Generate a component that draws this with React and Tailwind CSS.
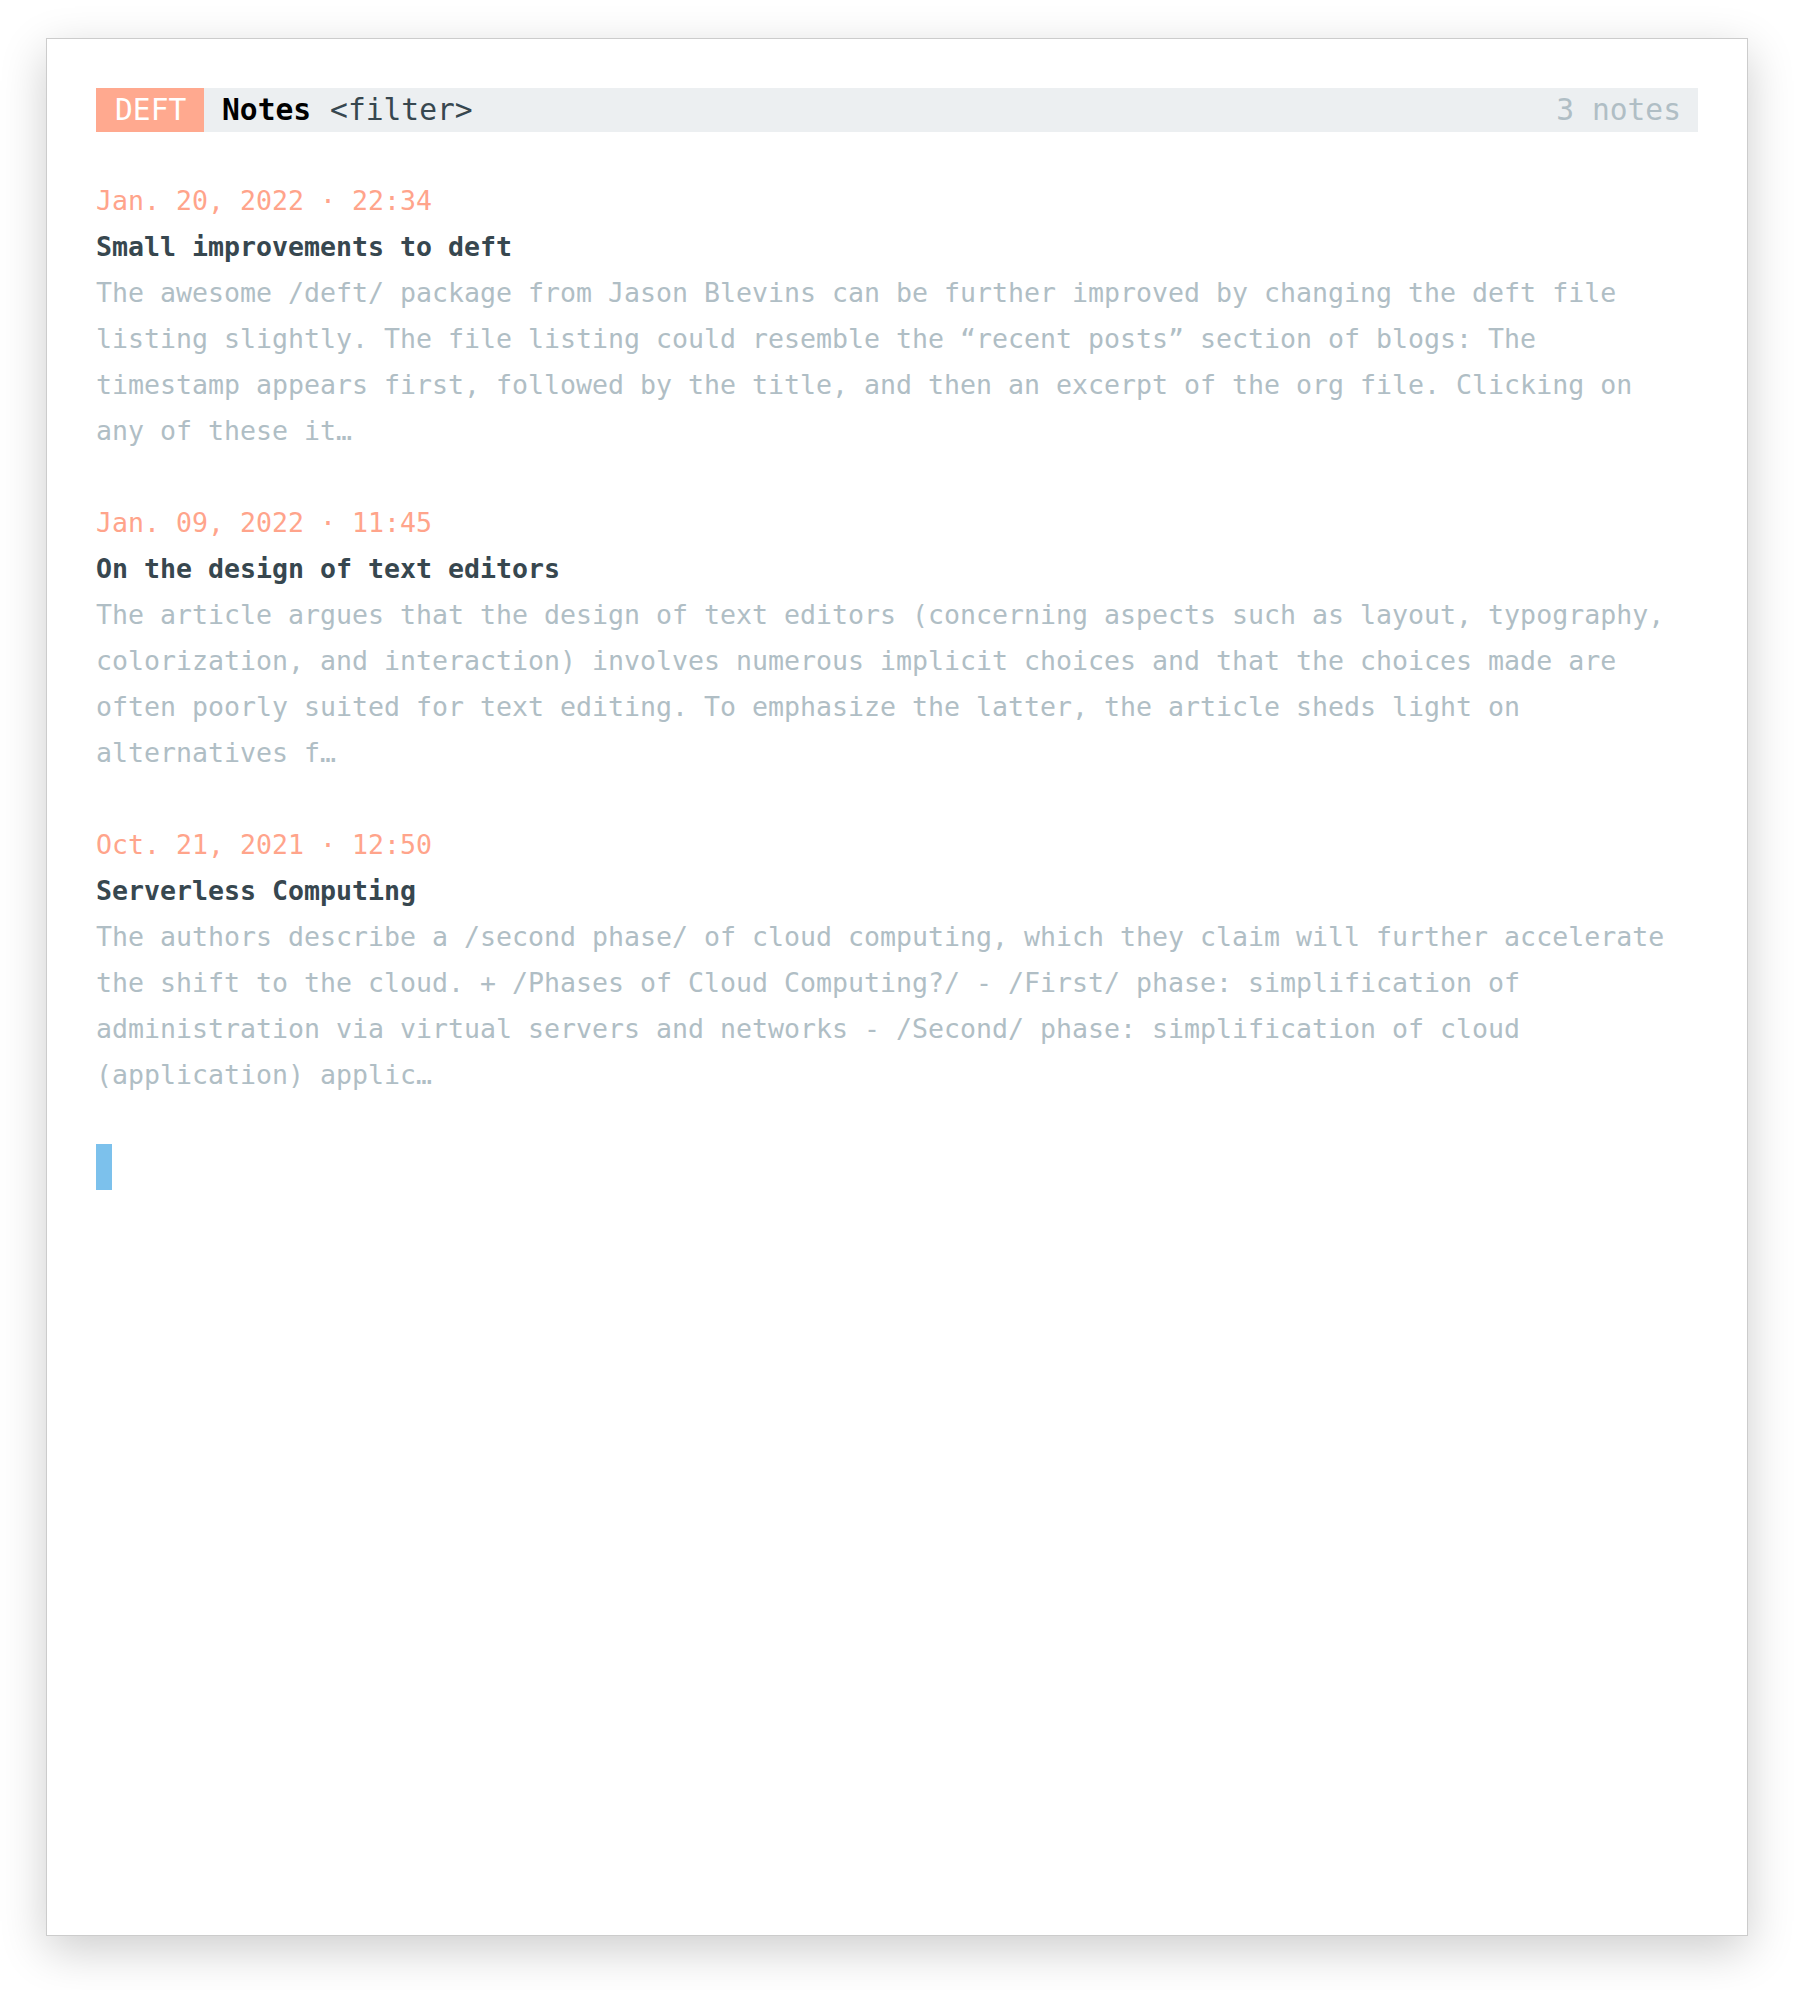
import React from 'react';

const notes = [
  {
    date: 'Jan. 20, 2022 · 22:34',
    title: 'Small improvements to deft',
    excerpt:
      'The awesome /deft/ package from Jason Blevins can be further improved by changing the deft file listing slightly. The file listing could resemble the “recent posts” section of blogs: The timestamp appears first, followed by the title, and then an excerpt of the org file. Clicking on any of these it…',
  },
  {
    date: 'Jan. 09, 2022 · 11:45',
    title: 'On the design of text editors',
    excerpt:
      'The article argues that the design of text editors (concerning aspects such as layout, typography, colorization, and interaction) involves numerous implicit choices and that the choices made are often poorly suited for text editing. To emphasize the latter, the article sheds light on alternatives f…',
  },
  {
    date: 'Oct. 21, 2021 · 12:50',
    title: 'Serverless Computing',
    excerpt:
      'The authors describe a /second phase/ of cloud computing, which they claim will further accelerate the shift to the cloud. + /Phases of Cloud Computing?/ - /First/ phase: simplification of administration via virtual servers and networks - /Second/ phase: simplification of cloud (application) applic…',
  },
];

const mono = "font-['DejaVu_Sans_Mono','Liberation_Mono',monospace]";

const App = () => {
  return (
    <div className={`w-[1794px] h-[1990px] bg-white pl-[46px] pt-[38px] ${mono}`}>
      {/* Window */}
      <div className="w-[1702px] h-[1898px] bg-white border border-black/20 shadow-[0_14px_44px_rgba(0,0,0,0.2)] pt-[49px] pl-[49px]">
        {/* Header */}
        <div className="w-[1602px] h-[44px] bg-[#eceff1] flex items-center text-[29.6px] leading-[44px]">
          <div className="w-[108px] h-[44px] bg-[#ffa98f] text-white pl-[19px] font-light">DEFT</div>
          <span className="ml-[18px] font-bold text-black">Notes</span>
          <span className="ml-[19px] text-[#37474f]">&lt;filter&gt;</span>
          <span className="ml-auto pr-[17px] text-[#b0bec5]">3 notes</span>
        </div>

        {/* Notes list */}
        <div className="mt-[46px] text-[26.58px] leading-[46px]">
          {notes.map((note) => (
            <div key={note.title} className="mb-[46px]">
              <div className="text-[#ffa48b]">{note.date}</div>
              <div className="font-bold text-[#37474f]">{note.title}</div>
              <p className="w-[1590px] text-[#b0bec5] font-light">{note.excerpt}</p>
            </div>
          ))}
          <div className="mt-[2px] w-[16px] h-[46px] bg-[#7cc1ec]" />
        </div>
      </div>
    </div>
  );
};

export default App;
